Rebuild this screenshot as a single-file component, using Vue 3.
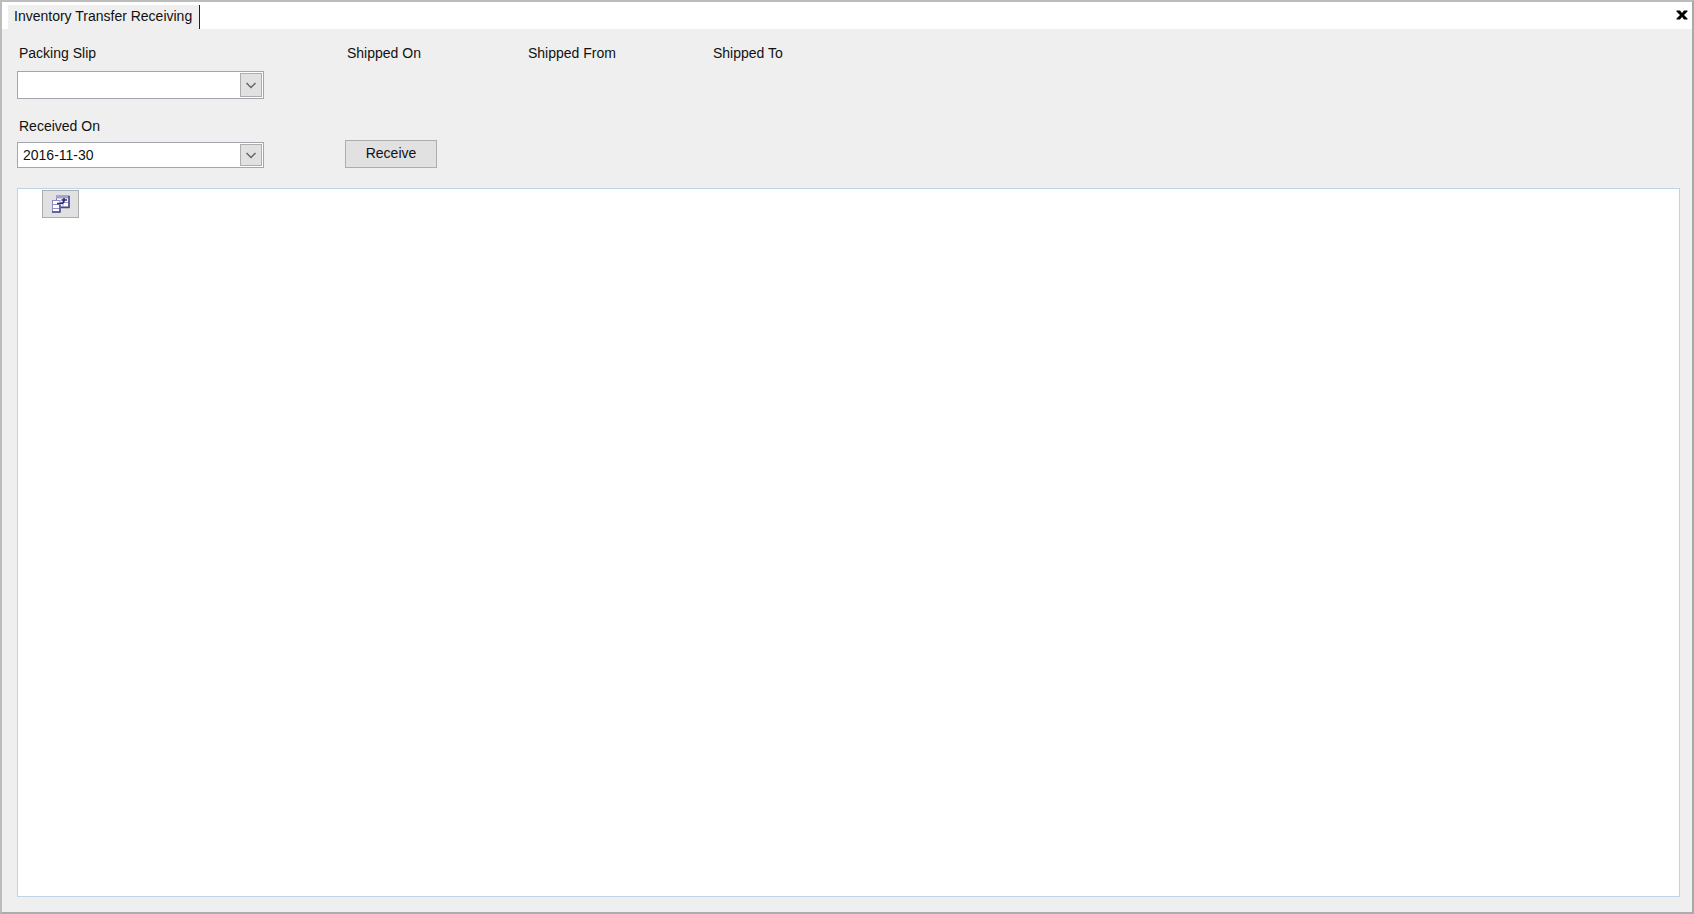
<script setup>
import { ref } from 'vue'

const packingSlip = ref('')
const receivedOn = ref('2016-11-30')
</script>

<template>
  <main class="window">
    <header class="tabs">
      <h1 class="tab">Inventory Transfer Receiving</h1>
      <button class="close" type="button" aria-label="Close">
        <svg width="12" height="10" viewBox="0 0 12 10" aria-hidden="true">
          <path d="M0.500 0.500h3.500L6 2.900 8 0.500h3.500v1L8 5l3.500 3.500v1H8L6 7.100 4 9.500H0.500v-1L4 5 0.500 1.500z" fill="#000" />
        </svg>
      </button>
    </header>

    <section class="content">
      <form class="form" @submit.prevent>
        <div class="field slip">
          <label for="packing-slip">Packing Slip</label>
          <div class="combo tall">
            <select id="packing-slip" v-model="packingSlip">
              <option value=""></option>
            </select>
            <span class="drop" aria-hidden="true">
              <svg width="12" height="8" viewBox="0 0 12 8"><path d="M1.500 2l4.500 4.500L10.500 2" fill="none" stroke="#666" stroke-width="1.500" /></svg>
            </span>
          </div>
        </div>
        <span class="caption">Shipped On</span>
        <span class="caption">Shipped From</span>
        <span class="caption">Shipped To</span>

        <div class="field received">
          <label for="received-on">Received On</label>
          <div class="combo">
            <select id="received-on" v-model="receivedOn">
              <option>2016-11-30</option>
            </select>
            <span class="drop" aria-hidden="true">
              <svg width="12" height="8" viewBox="0 0 12 8"><path d="M1.500 2l4.500 4.500L10.500 2" fill="none" stroke="#666" stroke-width="1.500" /></svg>
            </span>
          </div>
        </div>
        <button class="receive" type="submit">Receive</button>
      </form>

      <div class="panel">
        <button class="chooser" type="button" aria-label="Choose fields">
          <svg width="18" height="18" viewBox="0 0 18 18" aria-hidden="true">
            <rect x="4.500" y="1" width="12.500" height="11" fill="#fff" stroke="#7775b4" />
            <rect x="4" y="0.500" width="13.500" height="3" fill="#a3a1d2" />
            <path d="M5 7.500h12M11 4v8" stroke="#a09ecb" />
            <path d="M17 1v11.500H9" fill="none" stroke="#4b488a" stroke-width="1.500" />
            <rect x="0.500" y="5.500" width="7.500" height="11.500" fill="#fff" stroke="#8d8bc4" />
            <path d="M1 9.500h7M1 13.500h7" stroke="#9492c8" />
            <path d="M8 10v7H0" fill="none" stroke="#4b488a" stroke-width="1.500" />
            <path d="M5 8.500h4q3 0 3-3V3M9.500 5h5.500" fill="none" stroke="#2d2a63" stroke-width="1.500" />
          </svg>
        </button>
      </div>
    </section>
  </main>
</template>

<style>
body {
  background: #efefef;
}
</style>

<style scoped>
.window,
.window * {
  box-sizing: border-box;
}

.window {
  display: flex;
  flex-direction: column;
  min-height: 100vh;
  border: 2px solid #bcbcbc;
  border-right-color: #a8a8a8;
  border-bottom-color: #acacac;
  background: #efefef;
  color: #111;
  font: 14px/16px "Liberation Sans", Arial, sans-serif;
}

.tabs {
  display: flex;
  justify-content: space-between;
  height: 27px;
  padding-left: 6px;
  background: #fff;
}

.tab {
  align-self: flex-end;
  height: 24px;
  margin: 0;
  padding: 3px 7px 5px 6px;
  border-right: 1px solid #222;
  background: #efefef;
  font: inherit;
  white-space: nowrap;
}

.close {
  display: flex;
  align-items: center;
  padding: 0 4px 2px;
  border: 0;
  background: none;
}

.content {
  display: flex;
  flex: 1;
  flex-direction: column;
  gap: 20px;
  padding: 16px 12px 15px 15px;
}

.form {
  display: grid;
  grid-template-columns: 328px 181px 185px auto;
  justify-content: start;
  row-gap: 19px;
}

.field {
  display: flex;
  flex-direction: column;
  width: 247px;
}

.slip {
  gap: 10px;
}

.received {
  gap: 8px;
}

.field label {
  padding-left: 2px;
}

.caption {
  padding-left: 2px;
}

.combo {
  position: relative;
  height: 26px;
}

.combo.tall {
  height: 28px;
}

.combo select {
  display: block;
  width: 100%;
  height: 100%;
  padding: 0 28px 0 5px;
  border: 1px solid #a5a6ad;
  border-radius: 0;
  appearance: none;
  background: #fff;
  color: inherit;
  font: inherit;
}

.drop {
  position: absolute;
  top: 2px;
  right: 2px;
  bottom: 2px;
  display: flex;
  align-items: center;
  justify-content: center;
  width: 22px;
  border: 1px solid #adadad;
  background: #e1e1e1;
  pointer-events: none;
}

.receive {
  align-self: end;
  width: 92px;
  height: 28px;
  padding: 0 0 2px;
  border: 1px solid #adadad;
  background: #e1e1e1;
  color: inherit;
  font: inherit;
}

.panel {
  flex: 1;
  padding: 1px 24px;
  border: 1px solid #bfd3e6;
  background: #fff;
}

.chooser {
  display: flex;
  align-items: center;
  justify-content: center;
  width: 37px;
  height: 28px;
  padding: 0;
  border: 1px solid #adadad;
  background: #e1e1e1;
}
</style>
